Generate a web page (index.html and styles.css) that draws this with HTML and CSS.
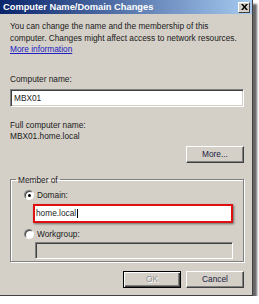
FILE: index.html
```html
<!DOCTYPE html>
<html>
<head>
<meta charset="utf-8">
<link rel="stylesheet" href="styles.css">
</head>
<body>
<div class="window">
  <div class="titlebar">
    <span class="title">Computer Name/Domain Changes</span>
    <span class="close"><svg width="7" height="6" viewBox="0 0 7 6"><path d="M0 0 L2 0 L3.5 2 L5 0 L7 0 L4.5 3 L7 6 L5 6 L3.5 4 L2 6 L0 6 L2.5 3 Z" fill="#000"/></svg></span>
  </div>
  <div class="content">
    <p class="intro">You can change the name and the membership of this<br>computer. Changes might affect access to network resources.<br><a class="link" href="#">More information</a></p>
    <div class="label label-name">Computer name:</div>
    <div class="field">MBX01</div>
    <div class="label label-full">Full computer name:</div>
    <div class="label">MBX01.home.local</div>
    <div class="row-right"><span class="button more">More...</span></div>
    <fieldset class="group">
      <legend class="legend">Member of</legend>
      <div class="option"><span class="radio checked"></span><span>Domain:</span></div>
      <div class="highlight"><div class="field inner">home.local<span class="caret"></span></div></div>
      <div class="option option-wg"><span class="radio"></span><span>Workgroup:</span></div>
      <div class="field inner disabled"></div>
    </fieldset>
    <div class="actions">
      <span class="button default disabled-text">OK</span>
      <span class="button">Cancel</span>
    </div>
  </div>
</div>
</body>
</html>
```
FILE: styles.css
```css
html, body {
  margin: 0;
  background: #ffffff;
}
body {
  font-family: "Liberation Sans", Arial, sans-serif;
  font-size: 8.3px;
  color: #1a1a1a;
}
.window {
  width: 253px;
  height: 296px;
  box-sizing: border-box;
  background: #d4d0c8;
  border-right: 1px solid #404040;
  border-bottom: 1px solid #404040;
  box-shadow: 4px 4px 2px rgba(0, 0, 0, 0.6);
  display: flex;
  flex-direction: column;
}
.titlebar {
  height: 14px;
  background: linear-gradient(to right, #0a246a, #a6caf0);
  display: flex;
  align-items: center;
  justify-content: space-between;
  padding: 0 2px 0 3px;
}
.title {
  color: #ffffff;
  font-weight: bold;
  font-size: 9.3px;
}
.close {
  width: 12px;
  height: 11px;
  box-sizing: border-box;
  background: #d4d0c8;
  border: 1px solid;
  border-color: #ffffff #404040 #404040 #ffffff;
  display: flex;
  align-items: center;
  justify-content: center;
}
.content {
  flex: 1;
  padding: 7px 8px 0 10px;
  display: flex;
  flex-direction: column;
}
.intro {
  margin: 0;
  line-height: 11.5px;
}
.link {
  color: #2020c0;
  text-decoration: underline;
}
.label {
  line-height: 11.5px;
}
.label-name {
  margin-top: 18.5px;
  margin-bottom: 3px;
}
.label-full {
  margin-top: 13px;
}
.field {
  height: 18px;
  box-sizing: border-box;
  background: #ffffff;
  border: 1px solid;
  border-color: #808080 #ffffff #ffffff #808080;
  box-shadow: inset 1px 1px 0 #404040, inset -1px -1px 0 #d4d0c8;
  padding: 0 3px;
  display: flex;
  align-items: center;
}
.row-right {
  display: flex;
  justify-content: flex-end;
  margin-top: 3px;
}
.button {
  width: 58px;
  height: 17px;
  box-sizing: border-box;
  background: #d4d0c8;
  border: 1px solid;
  border-color: #ffffff #404040 #404040 #ffffff;
  box-shadow: inset -1px -1px 0 #808080;
  display: flex;
  align-items: center;
  justify-content: center;
  color: #202040;
}
.group {
  margin: 12px 0 0 0;
  padding: 0 10px 7px 13px;
  height: 87px;
  box-sizing: border-box;
  border: 1px solid #808080;
  box-shadow: inset 1px 1px 0 #ffffff, 1px 1px 0 #ffffff;
  display: flex;
  flex-direction: column;
  min-width: 0;
}
.legend {
  padding: 0 2px;
  margin-left: -8px;
  line-height: 10px;
}
.option {
  display: flex;
  align-items: center;
  gap: 3px;
  line-height: 11px;
  margin-top: 5px;
}
.option-wg {
  margin-top: 6px;
}
.radio {
  width: 10px;
  height: 10px;
  box-sizing: border-box;
  border-radius: 50%;
  background: #ffffff;
  border: 1px solid;
  border-color: #808080 #ffffff #ffffff #808080;
  box-shadow: inset 1px 1px 0 #404040;
  position: relative;
}
.radio.checked::after {
  content: "";
  position: absolute;
  left: 2.5px;
  top: 2.5px;
  width: 3px;
  height: 3px;
  border-radius: 50%;
  background: #000;
}
.highlight {
  margin-top: 3px;
  margin-left: 9px;
  border: 2px solid #e01010;
  box-shadow: 1px 1px 2px rgba(0, 0, 0, 0.5);
}
.inner {
  height: 15px;
  padding-left: 1px;
}
.highlight .inner {
  border: none;
  box-shadow: none;
}
.caret {
  display: inline-block;
  width: 1px;
  height: 9px;
  background: #000;
  margin-left: 1px;
}
.option-wg + .field {
  margin-left: 11px;
  margin-top: 2px;
  height: 17px;
}
.disabled {
  background: #d4d0c8;
}
.actions {
  margin-top: 9px;
  display: flex;
  justify-content: flex-end;
  gap: 5px;
}
.default {
  border: 1px solid #000;
  box-shadow: inset 1px 1px 0 #ffffff, inset -1px -1px 0 #404040, inset -2px -2px 0 #808080;
}
.disabled-text {
  color: #909090;
  text-shadow: 1px 1px 0 #ffffff;
}
```
